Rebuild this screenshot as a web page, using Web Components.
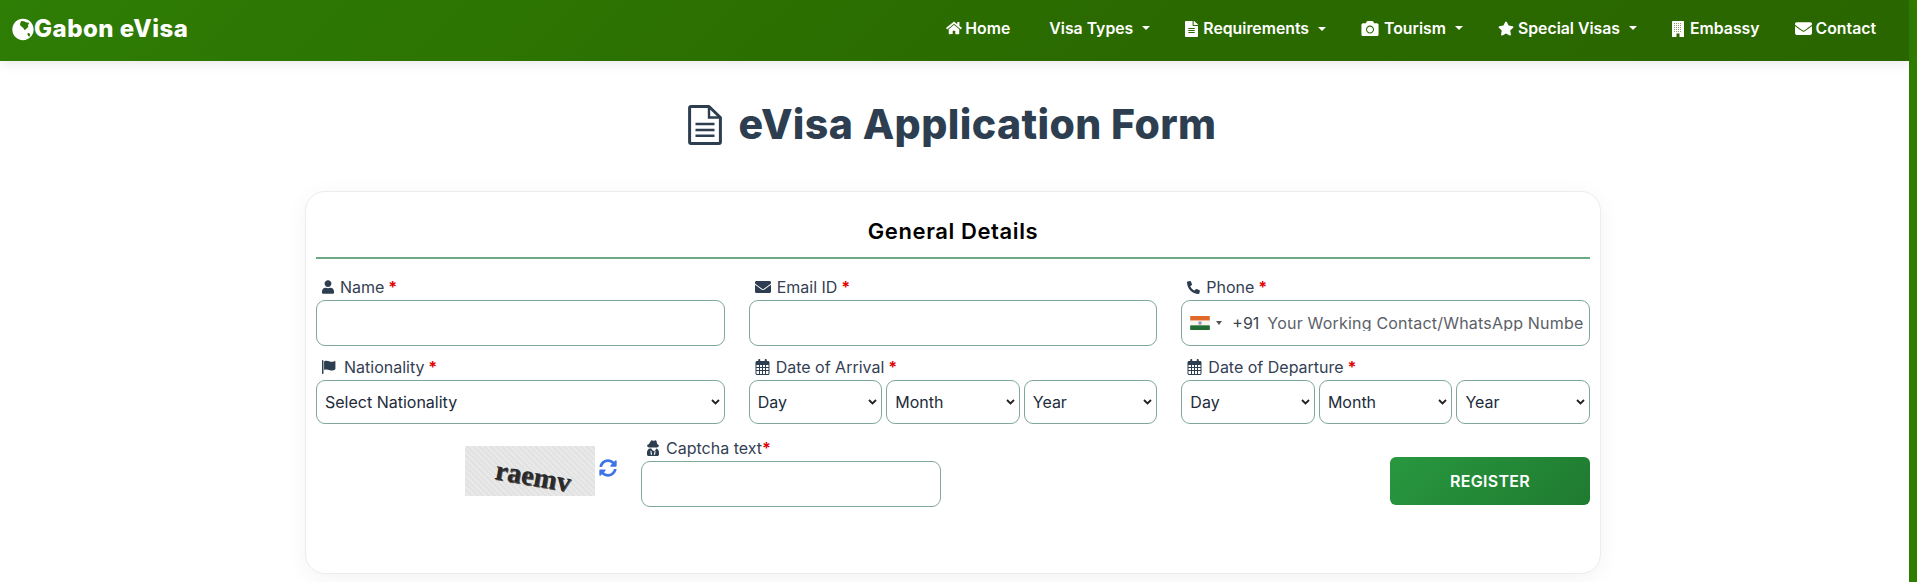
<!doctype html>
<html lang="en">
<head>
<meta charset="utf-8">
<title>eVisa Application Form</title>
<style>
  html, body { margin: 0; padding: 0; background: #fff; height: 582px; overflow: hidden; }
  body { font-family: Inter, "Liberation Sans", sans-serif; display: flex; }
  gv-page { flex: 1; min-width: 0; }
</style>
</head>
<body>
<gv-page>
  <gv-header></gv-header>
  <gv-title>eVisa Application Form</gv-title>
  <gv-card heading="General Details">
    <div slot="fields">
      <gv-row>
        <gv-field icon="user" label="Name"><gv-input></gv-input></gv-field>
        <gv-field icon="mail" label="Email ID"><gv-input></gv-input></gv-field>
        <gv-field icon="phone" label="Phone"><gv-phone></gv-phone></gv-field>
      </gv-row>
      <gv-row>
        <gv-field icon="flag" label="Nationality"><gv-select text="Select Nationality"></gv-select></gv-field>
        <gv-field icon="calendar" label="Date of Arrival"><gv-date></gv-date></gv-field>
        <gv-field icon="calendar" label="Date of Departure"><gv-date></gv-date></gv-field>
      </gv-row>
    </div>
    <gv-captcha slot="footer"></gv-captcha>
  </gv-card>
</gv-page>
<gv-scrollbar></gv-scrollbar>

<script>
// Icons, sized from the outside with css
const ICONS = {
  home: '<svg viewBox="0 0 576 512"><path d="M280 148 96 300v164c0 9 7 16 16 16l112-.3c9 0 16-7 16-16V368c0-9 7-16 16-16h64c9 0 16 7 16 16v96c0 9 7 16 16 16l112 .3c9 0 16-7 16-16V300L296 148c-5-4-11-4-16 0zM572 251l-84-69V44c0-7-5-12-12-12h-56c-7 0-12 5-12 12v72l-90-74c-18-15-44-15-62 0L4 251c-5 4-6 12-2 17l26 31c4 5 12 6 17 2L280 107c5-4 11-4 16 0l235 194c5 4 13 3 17-2l26-31c4-5 3-13-2-17z"/></svg>',
  file: '<svg viewBox="0 0 384 512" preserveAspectRatio="none"><path d="M224 136V0H24C11 0 0 11 0 24v464c0 13 11 24 24 24h336c13 0 24-11 24-24V160H248c-13 0-24-11-24-24zm64 236c0 7-5 12-12 12H108c-7 0-12-5-12-12v-8c0-7 5-12 12-12h168c7 0 12 5 12 12zm0-64c0 7-5 12-12 12H108c-7 0-12-5-12-12v-8c0-7 5-12 12-12h168c7 0 12 5 12 12zm0-72v8c0 7-5 12-12 12H108c-7 0-12-5-12-12v-8c0-7 5-12 12-12h168c7 0 12 5 12 12zm96-114v6H256V0h6c6 0 12 3 17 7l98 98c4 5 7 11 7 17z"/></svg>',
  camera: '<svg viewBox="0 32 512 448"><path fill-rule="evenodd" d="M512 144v288c0 26-22 48-48 48H48c-26 0-48-22-48-48V144c0-26 22-48 48-48h88l12-33c7-19 25-31 45-31h125c20 0 38 12 45 31l13 33h88c26 0 48 22 48 48zM376 288c0-66-54-120-120-120s-120 54-120 120 54 120 120 120 120-54 120-120zm-32 0c0 49-39 88-88 88s-88-39-88-88 39-88 88-88 88 39 88 88z"/></svg>',
  star: '<svg viewBox="0 0 576 512"><path d="M259 18l-65 132-146 21c-26 4-37 36-18 55l106 103-25 145c-5 26 23 46 46 34l131-69 131 69c23 12 51-8 46-34l-25-145 106-103c19-19 8-51-18-55l-146-21-65-132c-12-24-46-24-58 0z"/></svg>',
  building: '<svg viewBox="0 0 12 16"><defs><pattern id="w" width="2" height="2" patternUnits="userSpaceOnUse"><rect width="1" height="1" fill="#7fa36a"/></pattern></defs><rect width="12" height="16" rx=".6" fill="#fff"/><rect x="2" y="2" width="8" height="9" fill="url(#w)"/><rect x="4.500" y="12.500" width="3" height="3.500" fill="#2a6500"/></svg>',
  mail: '<svg viewBox="0 64 512 384"><path d="M502 191c4-3 10 0 10 5v204c0 26-22 48-48 48H48c-26 0-48-22-48-48V196c0-5 6-8 10-5 22 17 52 39 154 113 21 15 57 48 92 48 36 0 72-33 92-48 102-74 132-96 154-113zM256 320c23 0 57-29 73-41 133-97 143-105 174-129 6-5 9-12 9-19v-19c0-26-22-48-48-48H48C22 64 0 86 0 112v19c0 7 3 14 9 19 31 24 41 32 174 129 16 12 50 41 73 41z"/></svg>',
  user: '<svg viewBox="0 0 448 512"><path d="M224 256c71 0 128-57 128-128S295 0 224 0 96 57 96 128s57 128 128 128zm90 32h-17c-22 10-47 16-73 16s-51-6-73-16h-17C60 288 0 348 0 422v42c0 27 21 48 48 48h352c27 0 48-21 48-48v-42c0-74-60-134-134-134z"/></svg>',
  phone: '<svg viewBox="0 0 512 512"><path transform="matrix(-1 0 0 1 512 0)" d="M494 24 390 0c-11-3-23 3-27 14l-48 112c-4 10-1 21 7 28l60 49c-36 77-99 140-176 176l-49-60c-7-8-18-11-28-7L17 360c-11 5-17 16-14 28l24 104c3 11 12 20 24 20 256 0 461-205 461-461 0-12-8-21-18-27z"/></svg>',
  flag: '<svg viewBox="16 32 496 464"><path d="M40 32c13 0 24 11 24 24v424c0 9-7 16-16 16H32c-9 0-16-7-16-16V56c0-13 11-24 24-24zm296 62c-56 0-102-36-172-36-26 0-49 5-70 13-6 2-10 8-10 14v258c0 11 11 18 21 15 18-6 37-10 59-10 70 0 116 36 172 36 44 0 78-15 110-34 9-5 14-14 14-25V78c0-12-13-20-24-15-30 14-64 31-100 31z"/></svg>',
  calendar: '<svg viewBox="0 0 448 512"><path fill-rule="evenodd" d="M152 64h144V24c0-13 11-24 24-24h16c13 0 24 11 24 24v40h40c26 0 48 22 48 48v352c0 26-22 48-48 48H48c-26 0-48-22-48-48V112c0-26 22-48 48-48h40V24C88 11 99 0 112 0h16c13 0 24 11 24 24zM32 192v64h80v-64zm0 96v64h80v-64zm0 96v80c0 9 7 16 16 16h64v-96zm112-192v64h64v-64zm0 96v64h64v-64zm0 96v96h64v-96zm96-192v64h64v-64zm0 96v64h64v-64zm0 96v96h64v-96zm96-192v64h80v-64zm0 96v64h80v-64zm0 96v96h64c9 0 16-7 16-16v-80z"/></svg>',
  spy: '<svg viewBox="0 70 448 442" preserveAspectRatio="none"><path fill-rule="evenodd" d="M383 189l-30-91c-5-14-20-22-35-19l-43 11c-17 4-35 4-52 0l-44-11c-14-3-29 5-34 19L65 189C26 200 0 216 0 232c0 17 28 32 71 43 0 2-1 3-1 5h308c0-2-1-3-1-5 43-11 71-26 71-43 0-16-26-32-65-43zM96 304c-53 9-96 57-96 112v48c0 26 22 48 48 48h352c26 0 48-22 48-48v-48c0-55-43-103-96-112l-60 64h-72l-60-64zm64 64 32 112h-48l-16-112zm128 0h32l-16 112h-48z"/></svg>',
  sync: '<svg viewBox="0 0 512 512"><path d="M371 133c-32-30-73-46-116-45-77 1-144 54-163 128-1 5-6 9-12 9H24c-8 0-13-7-12-14C33 97 135 8 256 8c66 0 127 27 171 70l35-35c15-15 41-4 41 17v134c0 13-11 24-24 24H345c-21 0-32-26-17-41zM32 296h134c21 0 32 26 17 41l-42 42c32 30 73 46 116 45 77-1 144-54 163-128 1-5 6-9 12-9h56c8 0 13 7 12 14-21 114-123 203-244 203-66 0-127-27-171-70l-35 35c-15 15-41 4-41-17V318c0-12 11-22 23-22z"/></svg>',
  globe: '<svg viewBox="0 0 512 512"><path fill-rule="evenodd" d="M256 8C119 8 8 119 8 256s111 248 248 248 248-111 248-248S393 8 256 8zm168 370-12 34c-10 9-26 4-36-6-8-12-4-22-15-34-7-10-4-22 6-30l24-2c8 5 22 12 28 22 4 6 6 10 5 16zM210 70c10-8 24-12 40-8l36 4c10 4 8 14 16 16l84 18c8 0 12 8 8 14l-16 34c-8 6-8 12-2 20l4 24c2 10-16 14-22 20l-14 20c-8 8-16 6-24 12-8 8-6 18-16 22l-22-4c-8-12-2-26-14-36l-74-66C180 142 194 90 210 70z"/></svg>',
  fileo: '<svg viewBox="0 0 34 40"><path fill="none" stroke="currentColor" stroke-width="3" stroke-linejoin="round" d="M1.600 3c0-1 .7-1.500 1.500-1.500H21L32.400 12.500V37c0 1-.7 1.500-1.500 1.500H3.100c-.8 0-1.500-.5-1.500-1.500z"/><path fill="none" stroke="currentColor" stroke-width="2.400" d="M21 1.500v11h11.400"/><path stroke="currentColor" stroke-width="2.600" d="M7.500 19h19M7.500 25h19M7.500 30.700h19"/></svg>'
};

class GvHeader extends HTMLElement {
  constructor() {
    super();
    // icon, text, caret, icon width, icon height, gap to text
    const items = [
      ['home', 'Home', false, 16, 14, 3],
      ['', 'Visa Types', true, 0, 0, 0],
      ['file', 'Requirements', true, 13, 16, 5],
      ['camera', 'Tourism', true, 18, 15, 5],
      ['star', 'Special Visas', true, 16, 15, 4],
      ['building', 'Embassy', false, 12, 16, 6],
      ['mail', 'Contact', false, 17, 13, 4]
    ];
    const links = items.map( ( [icon, text, caret, w, h, gap] ) => `
      <a>${icon ? `<span class="i" style="width:${w}px;height:${h}px;margin-right:${gap}px">${ICONS[icon]}</span>` : ''}<span>${text}</span>${caret ? '<b></b>' : ''}</a>
    ` ).join( '' );
    this.attachShadow( {mode: 'open'} ).innerHTML = `
      <style>
        :host {
          align-items: center;
          background: linear-gradient( 135deg, #2e7d05 0%, #2a6900 60%, #2a6600 100% );
          box-shadow: 0 2px 12px rgba( 0, 0, 0, .1 );
          box-sizing: border-box;
          color: #fff;
          display: flex;
          height: 61px;
          justify-content: space-between;
          padding: 0 33px 3px 12px;
          position: relative;
        }
        .brand { align-items: center; display: flex; font: 800 24px/1 Inter, sans-serif; letter-spacing: .5px; }
        .brand svg { display: block; fill: #fff; height: 23px; width: 22px; }
        nav { align-items: center; display: flex; gap: 35px; font: 600 15.800px/1 Inter, sans-serif; margin-bottom: 1px; }
        a { align-items: center; display: flex; white-space: nowrap; }
        a:first-of-type { margin-right: 4px; }
        .i { display: inline-flex; }
        .i svg { display: block; fill: #fff; height: 100%; width: 100%; }
        b { border-left: 4px solid transparent; border-right: 4px solid transparent; border-top: 4px solid #fff; margin-left: 9px; }
      </style>
      <div class="brand">${ICONS.globe}<span>Gabon eVisa</span></div>
      <nav>${links}</nav>
    `;
  }
}

class GvTitle extends HTMLElement {
  constructor() {
    super();
    this.attachShadow( {mode: 'open'} ).innerHTML = `
      <style>
        :host {
          align-items: center;
          box-sizing: border-box;
          color: #2c3e50;
          display: flex;
          font: 800 41px/1.2 Inter, sans-serif;
          gap: 17px;
          height: 130px;
          justify-content: center;
          letter-spacing: .4px;
          padding: 0 5px 2px 0;
        }
        svg { display: block; height: 40px; width: 34px; }
      </style>
      ${ICONS.fileo}<h1 style="all: unset"><slot></slot></h1>
    `;
  }
}

class GvCard extends HTMLElement {
  constructor() {
    super();
    this.attachShadow( {mode: 'open'} ).innerHTML = `
      <style>
        :host {
          background: #fff;
          border: 1px solid #ececec;
          border-radius: 20px;
          box-shadow: 0 4px 22px rgba( 0, 0, 0, .05 );
          box-sizing: border-box;
          display: block;
          height: 383px;
          margin: 0 0 0 305px;
          padding: 0 10px;
          width: 1296px;
        }
        h2 {
          border-bottom: 2px solid #6aab85;
          color: #000;
          font: 600 22px/51px Inter, sans-serif;
          letter-spacing: .6px;
          margin: 0 0 18px;
          padding-top: 14px;
          text-align: center;
        }
      </style>
      <h2>${this.getAttribute( 'heading' )}</h2>
      <slot name="fields"></slot>
      <slot name="footer"></slot>
    `;
  }
}

class GvRow extends HTMLElement {
  constructor() {
    super();
    this.attachShadow( {mode: 'open'} ).innerHTML = `
      <style>
        :host { display: grid; gap: 24px; grid-template-columns: repeat( 3, 1fr ); margin-bottom: 11px; }
      </style>
      <slot></slot>
    `;
  }
}

class GvField extends HTMLElement {
  constructor() {
    super();
    const sizes = {
      user: [12, 14, 6],
      mail: [16, 12, 6],
      phone: [13, 13, 6],
      flag: [15, 14, 7],
      calendar: [15, 16, 6]
    };
    const name = this.getAttribute( 'icon' );
    const [w, h, gap] = sizes[name];
    this.attachShadow( {mode: 'open'} ).innerHTML = `
      <style>
        :host { display: block; min-width: 0; }
        label {
          align-items: center;
          color: #344054;
          display: flex;
          font: 400 16px/20px Inter, sans-serif;
          height: 20px;
          margin-bottom: 3px;
          padding-left: 6px;
        }
        .i { display: inline-flex; height: ${h}px; margin-right: ${gap}px; width: ${w}px; }
        svg { display: block; fill: #2c3e50; height: 100%; width: 100%; }
        em { color: #e00000; font-style: normal; font-weight: 700; white-space: pre; }
      </style>
      <label><span class="i">${ICONS[name]}</span>${this.getAttribute( 'label' )}<em> *</em></label>
      <slot></slot>
    `;
  }
}

class GvInput extends HTMLElement {
  constructor() {
    super();
    this.attachShadow( {mode: 'open'} ).innerHTML = `
      <style>
        :host { display: block; }
        input {
          background: #fff;
          border: 1px solid #7fa896;
          border-radius: 9px;
          box-sizing: border-box;
          display: block;
          height: 46px;
          outline: none;
          width: 100%;
        }
      </style>
      <input type="text" aria-label="text">
    `;
  }
}

class GvSelect extends HTMLElement {
  constructor() {
    super();
    this.attachShadow( {mode: 'open'} ).innerHTML = `
      <style>
        :host {
          align-items: center;
          background: #fff;
          border: 1px solid #7fa896;
          border-radius: 9px;
          box-sizing: border-box;
          color: #212b3a;
          display: flex;
          font: 400 16px/1 Inter, sans-serif;
          height: 44px;
          justify-content: space-between;
          min-width: 0;
          padding: 0 4px 0 8px;
        }
        svg { display: block; flex: none; height: 6px; width: 9px; }
      </style>
      <span>${this.getAttribute( 'text' )}</span>
      <svg viewBox="0 0 9 6"><path d="M1 1l3.500 3.500L8 1" fill="none" stroke="#222" stroke-width="1.800"/></svg>
    `;
  }
}

class GvDate extends HTMLElement {
  constructor() {
    super();
    this.attachShadow( {mode: 'open'} ).innerHTML = `
      <style>
        :host { display: grid; gap: 4px; grid-template-columns: repeat( 3, 1fr ); }
      </style>
      <gv-select text="Day"></gv-select>
      <gv-select text="Month"></gv-select>
      <gv-select text="Year"></gv-select>
    `;
  }
}

class GvPhone extends HTMLElement {
  constructor() {
    super();
    this.attachShadow( {mode: 'open'} ).innerHTML = `
      <style>
        :host {
          align-items: center;
          background: #fff;
          border: 1px solid #7fa896;
          border-radius: 9px;
          box-sizing: border-box;
          display: flex;
          font: 400 16px/1 Inter, sans-serif;
          height: 46px;
          padding: 0 6px 0 8px;
        }
        svg { display: block; flex: none; height: 14px; width: 20px; }
        i { border-left: 3px solid transparent; border-right: 3px solid transparent; border-top: 4px solid #555; flex: none; margin: 0 10px 0 6px; }
        span { color: #3d4650; flex: none; margin-right: 8px; white-space: nowrap; }
        div { color: #5b6168; flex: 1; letter-spacing: .2px; min-width: 0; overflow: hidden; white-space: nowrap; }
      </style>
      <svg viewBox="0 0 21 15">
        <rect width="21" height="5" fill="#e06a2c"/><rect y="5" width="21" height="5" fill="#f4f4f0"/><rect y="10" width="21" height="5" fill="#1f6b32"/>
        <circle cx="10.500" cy="7.500" r="2" fill="#9a9ab8"/>
      </svg>
      <i></i><span>+91</span><div>Your Working Contact/WhatsApp Number</div>
    `;
  }
}

class GvCaptcha extends HTMLElement {
  constructor() {
    super();
    this.attachShadow( {mode: 'open'} ).innerHTML = `
      <style>
        :host { align-items: flex-start; display: flex; margin-top: 14px; padding-left: 149px; }
        .pic {
          background: repeating-linear-gradient( 45deg, #e2e2e2 0 2px, #e9e9e9 2px 4px );
          box-sizing: border-box;
          color: #2a2a2a;
          flex: none;
          font: 700 28px/1 "Liberation Serif", serif;
          height: 50px;
          margin-top: 8px;
          overflow: hidden;
          padding: 10px 0 0 33px;
          width: 130px;
        }
        .pic span { display: block; text-shadow: 1px 1px 0 #555; transform: rotate( 10deg ); transform-origin: 0 0; }
        .sync { fill: #3f74e8; flex: none; height: 18px; margin: 21px 24px 0 4px; width: 18px; }
        .sync svg { display: block; }
        .cap { flex: none; width: 300px; }
        label { align-items: center; color: #344054; display: flex; font: 400 16px/20px Inter, sans-serif; height: 20px; margin-bottom: 3px; padding-left: 6px; }
        label svg { display: block; fill: #2c3e50; height: 16px; margin-right: 7px; width: 12px; }
        em { color: #e00000; font-style: normal; font-weight: 700; }
        button {
          background: linear-gradient( 135deg, #28983f, #1f7a30 );
          border: none;
          border-radius: 6px;
          color: #fff;
          flex: none;
          font: 600 16px/1 Inter, sans-serif;
          height: 48px;
          letter-spacing: .3px;
          margin: 19px 0 0 auto;
          padding: 0;
          width: 200px;
        }
      </style>
      <div class="pic"><span>raemv</span></div>
      <div class="sync">${ICONS.sync}</div>
      <div class="cap">
        <label>${ICONS.spy}Captcha text<em>*</em></label>
        <gv-input></gv-input>
      </div>
      <button type="button">REGISTER</button>
    `;
  }
}

class GvScrollbar extends HTMLElement {
  constructor() {
    super();
    this.attachShadow( {mode: 'open'} ).innerHTML = `
      <style>
        :host { background: #2f7d00; display: block; flex: none; height: 582px; width: 8px; }
      </style>
    `;
  }
}

class GvPage extends HTMLElement {
  constructor() {
    super();
    this.attachShadow( {mode: 'open'} ).innerHTML = `
      <style>:host { display: block; }</style>
      <slot></slot>
    `;
  }
}

window.customElements.define( 'gv-select', GvSelect );
window.customElements.define( 'gv-input', GvInput );
window.customElements.define( 'gv-date', GvDate );
window.customElements.define( 'gv-phone', GvPhone );
window.customElements.define( 'gv-field', GvField );
window.customElements.define( 'gv-row', GvRow );
window.customElements.define( 'gv-card', GvCard );
window.customElements.define( 'gv-title', GvTitle );
window.customElements.define( 'gv-header', GvHeader );
window.customElements.define( 'gv-captcha', GvCaptcha );
window.customElements.define( 'gv-scrollbar', GvScrollbar );
window.customElements.define( 'gv-page', GvPage );
</script>
</body>
</html>
